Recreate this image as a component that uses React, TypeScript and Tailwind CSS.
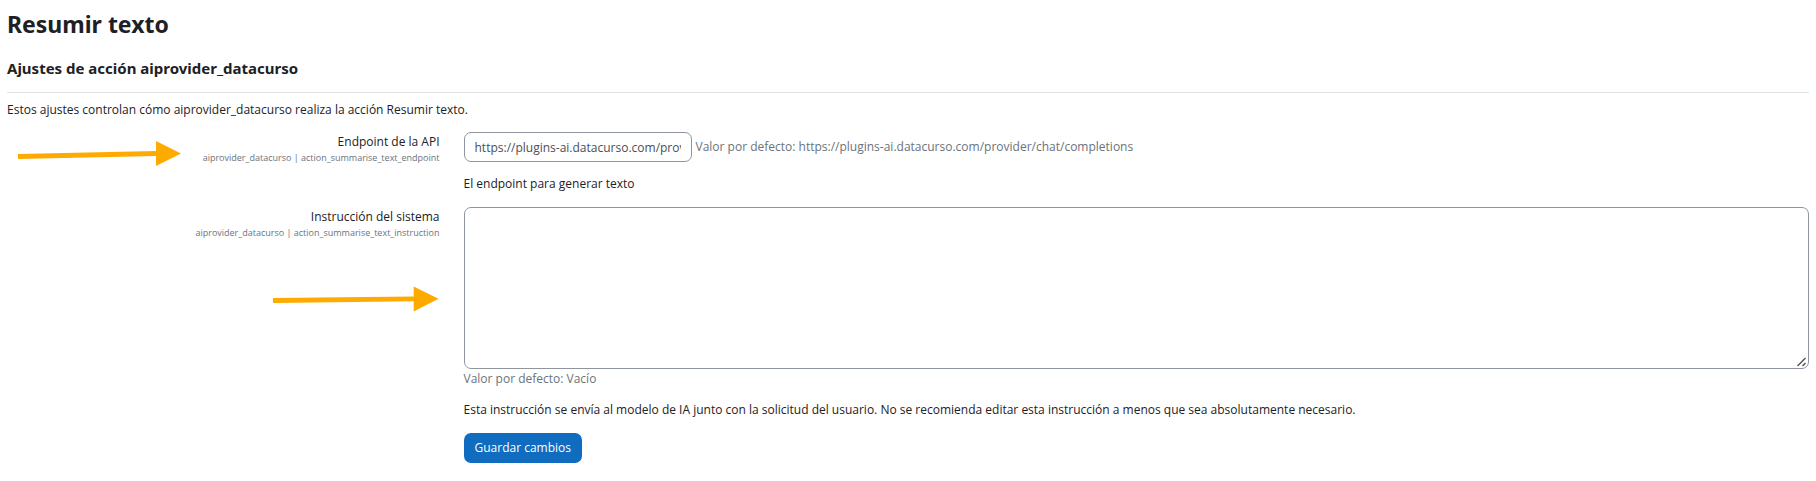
import { useState, type ReactNode } from 'react';

type SettingRowProps = {
  id: string;
  label: string;
  name: string;
  help: string;
  children: ReactNode;
};

function SettingRow({ id, label, name, help, children }: SettingRowProps) {
  return (
    <div className="-mx-3 mb-[13px] flex">
      <div className="w-1/4 shrink-0 px-3 text-right">
        <label htmlFor={id} className="block leading-5">
          {label}
        </label>
        <span className="block text-[9px] leading-3 text-[#6a737b]">{name}</span>
      </div>
      <div className="min-w-0 flex-1 px-3">
        {children}
        <p className="mt-3 leading-5">{help}</p>
      </div>
    </div>
  );
}

export default function App() {
  const [endpoint, setEndpoint] = useState('https://plugins-ai.datacurso.com/provider/chat/completions');
  const [instruction, setInstruction] = useState('');

  return (
    <main className="relative bg-white px-[7px] pt-2 pb-4 font-['Open_Sans','Noto_Sans',sans-serif] text-xs text-[#1d2125]">
      <h1 className="font-['Noto_Sans',sans-serif] text-[23px] leading-8 font-bold">Resumir texto</h1>
      <form onSubmit={(event) => event.preventDefault()}>
        <h2 className="mt-4 font-['Noto_Sans',sans-serif] text-[15px] leading-6 font-bold">
          Ajustes de acción aiprovider_datacurso
        </h2>
        <hr className="mt-3 mb-[7px] border-[#dee2e6]" />
        <p className="mb-3 leading-5">
          Estos ajustes controlan cómo aiprovider_datacurso realiza la acción Resumir texto.
        </p>

        <SettingRow
          id="endpoint"
          label="Endpoint de la API"
          name="aiprovider_datacurso | action_summarise_text_endpoint"
          help="El endpoint para generar texto"
        >
          <div className="flex items-center gap-1">
            <input
              id="endpoint"
              type="text"
              value={endpoint}
              onChange={(event) => setEndpoint(event.target.value)}
              className="h-[30px] w-[228px] rounded-[7px] border border-[#8f959e] bg-white px-[10px] text-[#495057]"
            />
            <span className="text-[#6a737b]">
              Valor por defecto: https://plugins-ai.datacurso.com/provider/chat/completions
            </span>
          </div>
        </SettingRow>

        <SettingRow
          id="instruction"
          label="Instrucción del sistema"
          name="aiprovider_datacurso | action_summarise_text_instruction"
          help="Esta instrucción se envía al modelo de IA junto con la solicitud del usuario. No se recomienda editar esta instrucción a menos que sea absolutamente necesario."
        >
          <div className="relative">
            <textarea
              id="instruction"
              value={instruction}
              onChange={(event) => setInstruction(event.target.value)}
              className="block h-[162px] w-full resize-none rounded-[7px] border border-[#8f959e] bg-white px-[10px] py-1 text-[#495057]"
            />
            <svg
              className="pointer-events-none absolute right-0.5 bottom-0.5 size-[10px]"
              viewBox="0 0 10 10"
              fill="none"
              stroke="#505050"
              strokeWidth="1.4"
              aria-hidden="true"
            >
              <path d="M0.5 9L8.5 1M5.5 9L8.5 6" />
            </svg>
          </div>
          <div className="leading-[19px] text-[#6a737b]">Valor por defecto: Vacío</div>
        </SettingRow>

        <div className="-mx-3 flex">
          <div className="ml-[25%] px-3">
            <button type="submit" className="h-[30px] rounded-[7px] bg-[#0f6cbf] px-[11px] text-white">
              Guardar cambios
            </button>
          </div>
        </div>
      </form>

      <svg
        className="pointer-events-none absolute top-[140px] left-[16px] h-[28px] w-[168px]"
        viewBox="16 140 168 28"
        fill="#ffaa00"
        aria-hidden="true"
      >
        <path d="M18 154L156 151V141L181 153.5L156 166V156L18 159Z" />
      </svg>
      <svg
        className="pointer-events-none absolute top-[286px] left-[272px] h-[28px] w-[168px]"
        viewBox="272 286 168 28"
        fill="#ffaa00"
        aria-hidden="true"
      >
        <path d="M273 298L413.7 296.6V286.5L438.5 298.7L413.7 311.5V301.3L273 303Z" />
      </svg>
    </main>
  );
}
